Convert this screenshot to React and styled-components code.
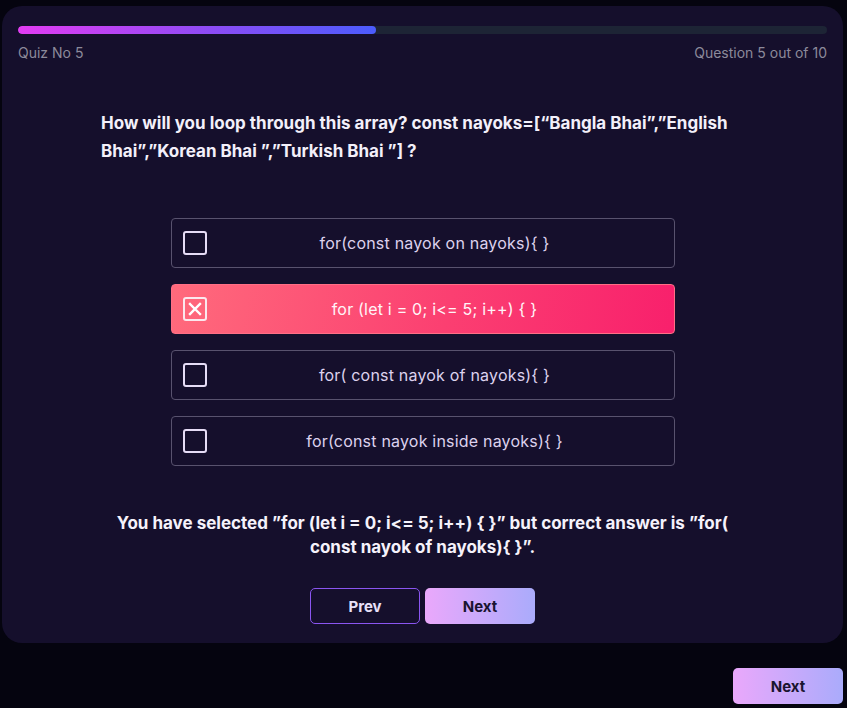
import React from 'react'
import styled, { createGlobalStyle } from 'styled-components'

const GlobalStyle = createGlobalStyle`
  html, body {
    margin: 0;
    padding: 0;
    background: #05040f;
    font-family: Inter, "Noto Sans", sans-serif;
  }
`

const options = [
  'for(const nayok on nayoks){ }',
  'for (let i = 0; i<= 5; i++) { }',
  'for( const nayok of nayoks){ }',
  'for(const nayok inside nayoks){ }',
]

const feedback =
  'You have selected ”for (let i = 0; i<= 5; i++) { }” but correct answer is ”for( const nayok of nayoks){ }”.'

function Checkbox({ checked }) {
  return (
    <Box checked={checked}>
      {checked && (
        <svg width="14" height="14" viewBox="0 0 14 14">
          <path d="M2 2 L12 12 M12 2 L2 12" stroke="#fff" strokeWidth="2.4" strokeLinecap="square" />
        </svg>
      )}
    </Box>
  )
}

function App() {
  const selected = 1
  return (
    <Page>
      <GlobalStyle />
      <Card>
        <Track>
          <Fill style={{ width: '44.3%' }} />
        </Track>
        <Meta>
          <span>Quiz No 5</span>
          <span>Question 5 out of 10</span>
        </Meta>
        <Question>
          How will you loop through this array? const nayoks=[“Bangla Bhai”,”English Bhai”,”Korean Bhai ”,”Turkish Bhai ”] ?
        </Question>
        <Options>
          {options.map((o, i) => (
            <Option key={i} active={i === selected}>
              <Checkbox checked={i === selected} />
              <OptionText active={i === selected}>{o}</OptionText>
            </Option>
          ))}
        </Options>
        <Feedback>{feedback}</Feedback>
        <Nav>
          <OutlineButton>Prev</OutlineButton>
          <GradientButton>Next</GradientButton>
        </Nav>
      </Card>
      <Footer>
        <GradientButton>Next</GradientButton>
      </Footer>
    </Page>
  )
}

export default App

const Page = styled.div`
  width: 847px;
  height: 708px;
  padding: 6px 4px 0 2px;
  box-sizing: border-box;
  overflow: hidden;
`

const Card = styled.div`
  background: #150f2c;
  border-radius: 20px;
  height: 637px;
  box-sizing: border-box;
  padding: 20px 16px 0 16px;
  display: flex;
  flex-direction: column;
`

const Track = styled.div`
  height: 8px;
  border-radius: 4px;
  background: #1d2435;
  overflow: hidden;
`

const Fill = styled.div`
  height: 100%;
  border-radius: 4px;
  background: linear-gradient(90deg, #e23cf2 0%, #8b4cf5 55%, #4b5cfd 100%);
`

const Meta = styled.div`
  display: flex;
  justify-content: space-between;
  margin-top: 10px;
  font-size: 14px;
  color: #8c8a9b;
`

const Question = styled.p`
  margin: 48px 0 0 83px;
  width: 650px;
  font-size: 17px;
  font-weight: 700;
  line-height: 28px;
  color: #f3f0fa;
`

const Options = styled.div`
  display: flex;
  flex-direction: column;
  gap: 16px;
  width: 504px;
  margin: 53px auto 0 auto;
`

const Option = styled.div`
  height: 50px;
  box-sizing: border-box;
  border-radius: 4px;
  border: 1px solid ${p => (p.active ? '#ff6f86' : '#58526e')};
  background: ${p => (p.active ? 'linear-gradient(100deg, #ff6a7c 0%, #fb3f71 55%, #f8206c 100%)' : 'transparent')};
  display: flex;
  align-items: center;
  padding: 0 11px;
`

const Box = styled.div`
  width: 24px;
  height: 24px;
  box-sizing: border-box;
  border: 2px solid ${p => (p.checked ? '#fbe8ee' : '#e6dcf6')};
  border-radius: 3px;
  display: flex;
  align-items: center;
  justify-content: center;
  flex-shrink: 0;
`

const OptionText = styled.div`
  flex: 1;
  text-align: center;
  font-size: 16px;
  letter-spacing: 0.2px;
  color: ${p => (p.active ? '#fff5f8' : '#ddd2ee')};
`

const Feedback = styled.p`
  margin: 45px auto 0 auto;
  width: 650px;
  text-align: center;
  font-size: 17px;
  font-weight: 700;
  line-height: 24px;
  color: #f5f2fb;
`

const Nav = styled.div`
  display: flex;
  justify-content: center;
  gap: 5px;
  margin-top: 29px;
`

const OutlineButton = styled.button`
  width: 110px;
  height: 36px;
  border-radius: 5px;
  border: 1px solid #8a55f0;
  background: transparent;
  color: #e8e0f8;
  font-family: Inter, sans-serif;
  font-weight: 700;
  font-size: 15px;
`

const GradientButton = styled.button`
  width: 110px;
  height: 36px;
  border-radius: 5px;
  border: none;
  background: linear-gradient(90deg, #eaa8fb 0%, #aaabfb 100%);
  color: #1a1430;
  font-family: Inter, sans-serif;
  font-weight: 700;
  font-size: 15px;
`

const Footer = styled.div`
  display: flex;
  justify-content: flex-end;
  margin-top: 25px;
`
